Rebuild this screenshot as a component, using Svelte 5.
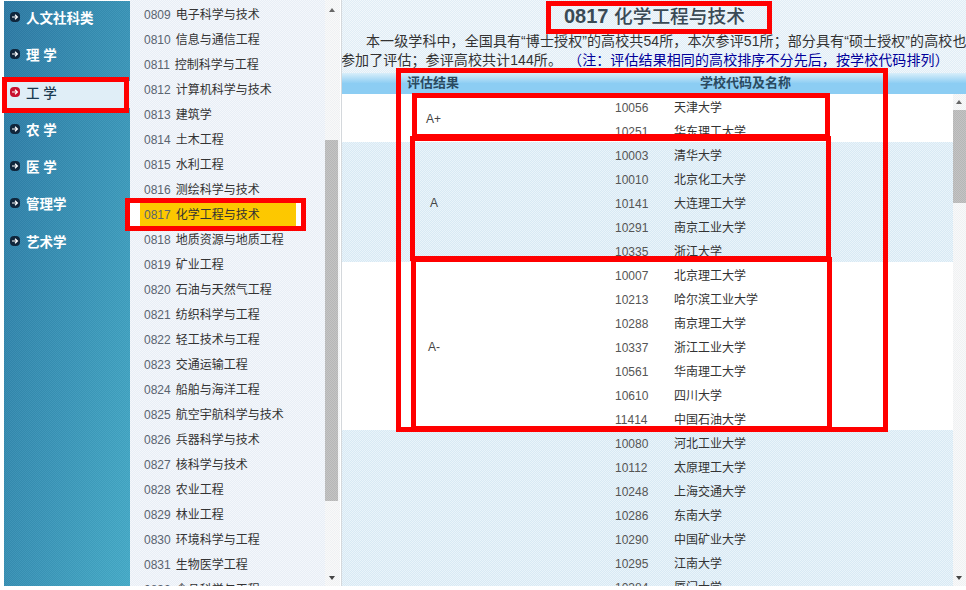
<script>
  const cats = [
    ['人文社科类', false], ['理 学', false], ['工 学', true], ['农 学', false],
    ['医 学', false], ['管理学', false], ['艺术学', false]
  ];
  const subjects = [
    ['0809', '电子科学与技术'], ['0810', '信息与通信工程'], ['0811', '控制科学与工程'],
    ['0812', '计算机科学与技术'], ['0813', '建筑学'], ['0814', '土木工程'],
    ['0815', '水利工程'], ['0816', '测绘科学与技术'], ['0817', '化学工程与技术'],
    ['0818', '地质资源与地质工程'], ['0819', '矿业工程'], ['0820', '石油与天然气工程'],
    ['0821', '纺织科学与工程'], ['0822', '轻工技术与工程'], ['0823', '交通运输工程'],
    ['0824', '船舶与海洋工程'], ['0825', '航空宇航科学与技术'], ['0826', '兵器科学与技术'],
    ['0827', '核科学与技术'], ['0828', '农业工程'], ['0829', '林业工程'],
    ['0830', '环境科学与工程'], ['0831', '生物医学工程'], ['0832', '食品科学与工程']
  ];
  const groups = [
    { grade: 'A+', cls: 'g-aplus', tint: false, rows: [['10056', '天津大学'], ['10251', '华东理工大学']] },
    { grade: 'A', cls: 'g-a', tint: true, rows: [['10003', '清华大学'], ['10010', '北京化工大学'], ['10141', '大连理工大学'], ['10291', '南京工业大学'], ['10335', '浙江大学']] },
    { grade: 'A-', cls: 'g-aminus', tint: false, rows: [['10007', '北京理工大学'], ['10213', '哈尔滨工业大学'], ['10288', '南京理工大学'], ['10337', '浙江工业大学'], ['10561', '华南理工大学'], ['10610', '四川大学'], ['11414', '中国石油大学']] },
    { grade: '', cls: 'g-b', tint: true, rows: [['10080', '河北工业大学'], ['10112', '太原理工大学'], ['10248', '上海交通大学'], ['10286', '东南大学'], ['10290', '中国矿业大学'], ['10295', '江南大学'], ['10384', '厦门大学']] }
  ];
</script>

<div class="page">
  <nav class="side">
    {#each cats as [name, active]}
      <div class="cat" class:active>
        <svg class="arrow" width="10" height="10" viewBox="0 0 10 10">
          <rect width="10" height="10" rx="4" fill={active ? '#c8102e' : '#10263c'} />
          <path d="M2 5h5M5 2.8 7.4 5 5 7.2" fill="none" stroke="#fff" stroke-width="1.2" />
        </svg>
        <span>{name}</span>
      </div>
    {/each}
  </nav>

  <div class="list">
    {#each subjects as [code, name]}
      <div class="subject" class:sel={code === '0817'}>
        <div class="hl"><span class="num">{code}</span>{name}</div>
      </div>
    {/each}
    <div class="bar">
      <i class="up"></i><i class="thumb"></i><i class="down"></i>
    </div>
  </div>

  <main class="content">
    <h1><b>0817</b> <span>化学工程与技术</span></h1>
    <p class="intro l1">本一级学科中，全国具有“博士授权”的高校共54所，本次参评51所；部分具有“硕士授权”的高校也</p>
    <p class="intro l2">参加了评估；参评高校共计144所。<span class="note">（注：评估结果相同的高校排序不分先后，按学校代码排列）</span></p>

    <div class="thead">
      <span class="th1">评估结果</span>
      <span class="th2">学校代码及名称</span>
    </div>
    <div class="tbody">
      {#each groups as g}
        <section class="group" class:tint={g.tint}>
          <div class="grade {g.cls}">{g.grade}</div>
          <div class="rows">
            {#each g.rows as [code, name]}
              <div class="row"><span class="code">{code}</span><span>{name}</span></div>
            {/each}
          </div>
        </section>
      {/each}
      <div class="bar bar2">
        <i class="up"></i><i class="thumb"></i><i class="down"></i>
      </div>
    </div>
  </main>

  <div class="mark m-cat"></div>
  <div class="mark m-sub"></div>
  <div class="mark m-title"></div>
  <div class="mark m-table"></div>
  <div class="mark m-aplus"></div>
  <div class="mark m-a"></div>
  <div class="mark m-aminus"></div>
</div>

<style>
  :global(body) { margin: 0; background: #fff; }
  .page {
    position: relative;
    display: flex;
    width: 966px;
    height: 590px;
    overflow: hidden;
    font-family: "Liberation Sans", "Noto Sans CJK SC", sans-serif;
    font-size: 12px;
    color: #333;
  }
  .side {
    margin: 1px 0 0 4px;
    width: 126px;
    height: 585px;
    flex: none;
    background:
      repeating-conic-gradient(rgba(255,255,255,.05) 0 25%, rgba(0,0,0,.03) 0 50%) 0 0/2px 2px,
      linear-gradient(100deg, #2b79a4, #44abc8);
  }
  .cat {
    box-sizing: border-box;
    height: 37.35px;
    padding: 0 0 6px 6px;
    display: flex;
    align-items: center;
    gap: 6px;
    color: #fff;
    font-size: 13.5px;
    font-weight: 700;
  }
  .cat.active {
    background: #e0eef7;
    color: #1b3a50;
    font-weight: 500;
    margin: 5px 0;
    height: 27.35px;
    padding-bottom: 4px;
  }
  .arrow { flex: none; }
  .list {
    position: relative;
    width: 210px;
    height: 586px;
    flex: none;
    overflow: hidden;
    background: repeating-conic-gradient(#e8eef6 0 25%, #f4f7fb 0 50%) 0 0/2px 2px;
  }
  .subject {
    height: 25px;
    line-height: 25px;
    color: #333;
    white-space: nowrap;
  }
  .subject:first-child { margin-top: 3px; }
  .hl { padding-left: 14px; }
  .sel .hl {
    background: #fdc800;
    box-shadow: -10px 0 #fff, 5px 0 #fff;
    width: 152px;
    margin-left: 10px;
    padding-left: 4px;
  }
  .num { color: #5a6470; margin-right: 5px; }
  .bar {
    position: absolute; right: 0; top: 0; bottom: 0; width: 15px;
    background: repeating-conic-gradient(#eff1f3 0 25%, #f9f9f9 0 50%) 0 0/2px 2px;
  }
  .bar .up, .bar .down {
    position: absolute; left: 4px; width: 0; height: 0;
    border-left: 3.5px solid transparent; border-right: 3.5px solid transparent;
  }
  .bar .up { top: 8px; border-bottom: 4px solid #666; }
  .bar .down { bottom: 6px; border-top: 4px solid #444; }
  .bar .thumb {
    position: absolute; left: 0; right: 2px; top: 140px; height: 361px;
    background: repeating-conic-gradient(#b6b6b6 0 25%, #c4c4c4 0 50%) 0 0/2px 2px;
  }
  .content {
    flex: 1;
    min-width: 0;
    height: 586px;
    margin-left: 1px;
    border-left: 1px solid #d4d8dc;
    display: flex;
    flex-direction: column;
    overflow: hidden;
    background: repeating-conic-gradient(#e0edf6 0 25%, #f1f7fb 0 50%) 0 0/2px 2px;
  }
  h1 {
    margin: 0;
    height: 32px;
    line-height: 32px;
    padding-left: 222px;
    font-size: 20px;
    font-weight: 700;
    color: #3a4a55;
    white-space: nowrap;
  }
  h1 span { font-size: 18.7px; font-weight: 500; }
  .intro {
    margin: 0;
    font-size: 14px;
    line-height: 19px;
    color: #333;
    white-space: nowrap;
    letter-spacing: 0.1px;
  }
  .l1 { padding-left: 24px; }
  .l2 { margin-left: -1px; }
  .note { color: #00009a; margin-left: 13px; letter-spacing: 0.1px; }
  .thead {
    position: relative;
    height: 21px;
    margin-top: 3px;
    flex: none;
    line-height: 19px;
    font-size: 13px;
    font-weight: 700;
    color: #2a4a60;
    background: linear-gradient(#d8eefa 0%, #8ccdf3 50%, #8ccdf3 100%);
  }
  .th1 { position: absolute; left: 65px; }
  .th2 { position: absolute; left: 358px; }
  .tbody { position: relative; flex: 1; min-height: 0; overflow: hidden; }
  .group { display: flex; background: #fff; }
  .group.tint { background: repeating-conic-gradient(#d8e9f4 0 25%, #eaf4fa 0 50%) 0 0/2px 2px; }
  .grade {
    width: 273px;
    box-sizing: border-box;
    align-self: center;
    flex: none;
    padding-top: 2px;
    color: #444;
  }
  .g-aplus { padding-left: 84px; }
  .g-a { padding-left: 88px; }
  .g-aminus { padding-left: 86px; }
  .rows { flex: 1; }
  .row {
    box-sizing: border-box;
    height: 24px;
    padding-top: 2px;
    line-height: 24px;
    color: #333;
    display: flex;
  }
  .code { width: 59px; color: #555; }
  .bar2 { top: 0; width: 13px; }
  .bar2 .up { left: 3px; top: 6px; }
  .bar2 .down { left: 3px; }
  .bar2 .thumb { right: 0; top: 16px; height: 93px; }
  .mark { position: absolute; box-sizing: border-box; border: 5px solid #f00; }
  .m-cat { left: 2px; top: 77px; width: 127px; height: 36px; }
  .m-sub { left: 125px; top: 198px; width: 181px; height: 33px; }
  .m-title { left: 546px; top: 1px; width: 226px; height: 33px; }
  .m-table { left: 396px; top: 68px; width: 492px; height: 364px; }
  .m-aplus { left: 412px; top: 93px; width: 418px; height: 46px; }
  .m-a { left: 410px; top: 136px; width: 421px; height: 125px; }
  .m-aminus { left: 411px; top: 257px; width: 421px; height: 174px; }
</style>
